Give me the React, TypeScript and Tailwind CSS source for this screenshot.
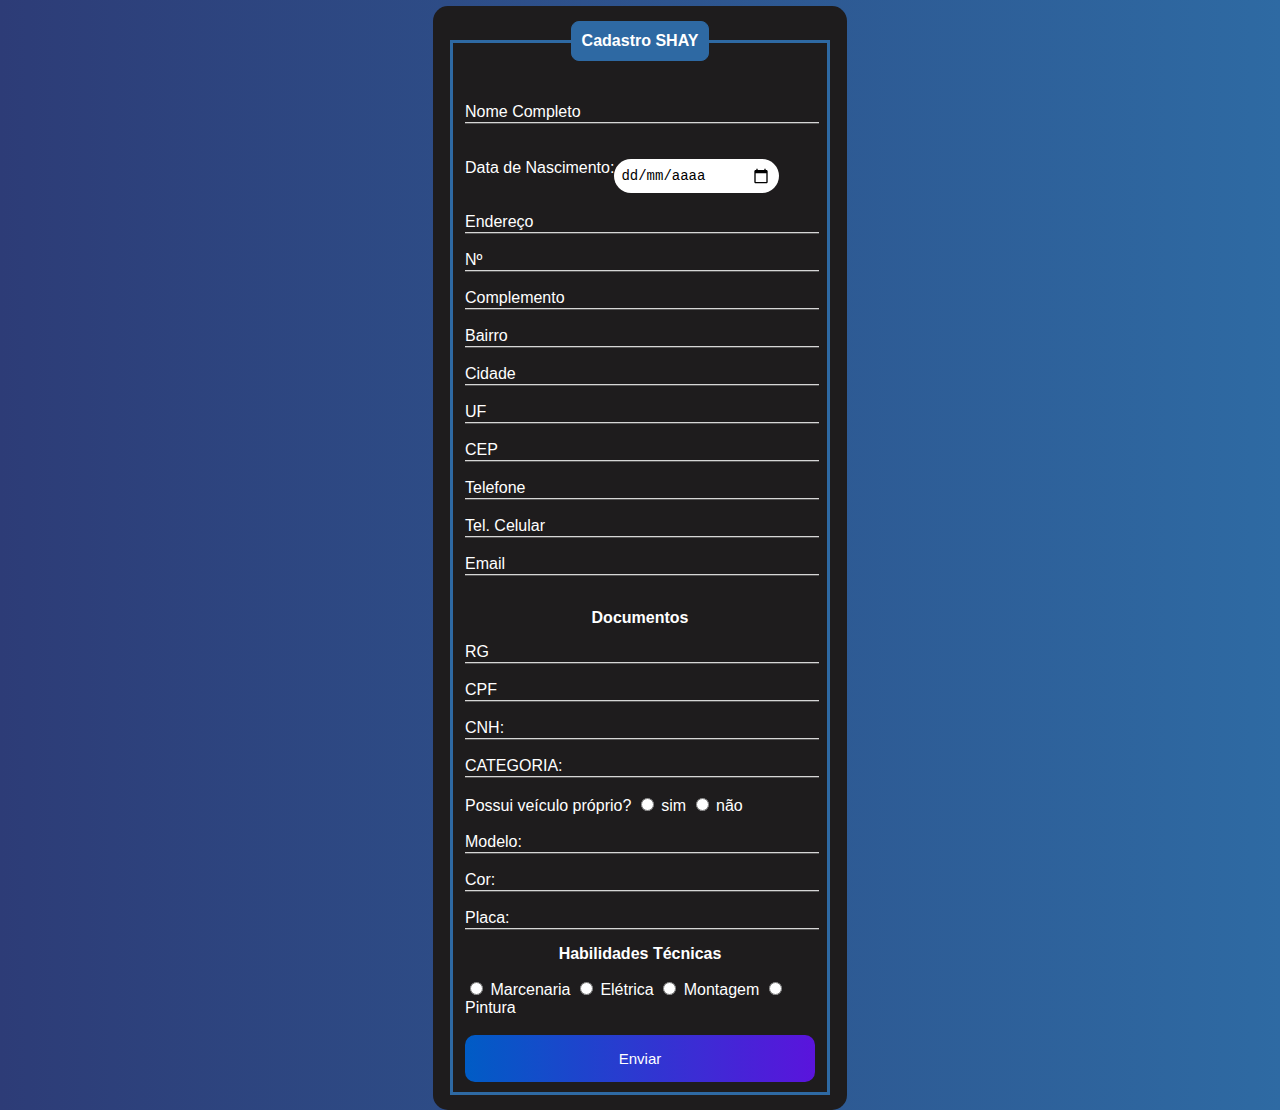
import React from "react";

type FieldProps = { id: string; label: string; type?: string };

function Field({ id, label, type = "text" }: FieldProps) {
  return (
    <div className="relative -mr-1 h-[22px]">
      <input
        id={id}
        name={id}
        type={type}
        className="peer block h-full w-full border-b border-[#d6d6d6] bg-transparent text-base text-white shadow-[0_1px_0_#555454] outline-none"
      />
      <label
        htmlFor={id}
        className="pointer-events-none absolute left-0 top-[2px] peer-focus:-top-4 peer-focus:text-xs"
      >
        {label}
      </label>
    </div>
  );
}

function Radio({ id, name, label }: { id: string; name: string; label: string }) {
  return (
    <>
      <input
        id={id}
        type="radio"
        name={name}
        value={id}
        className="mr-[3px] ml-[5px] h-[13px] w-[13px]"
      />{" "}
      <label htmlFor={id}>{label}</label>{" "}
    </>
  );
}

const address: FieldProps[] = [
  { id: "endereco", label: "Endereço" },
  { id: "numero", label: "Nº" },
  { id: "complemento", label: "Complemento" },
  { id: "bairro", label: "Bairro" },
  { id: "cidade", label: "Cidade" },
  { id: "uf", label: "UF" },
  { id: "cep", label: "CEP" },
  { id: "telefone", label: "Telefone", type: "tel" },
  { id: "celular", label: "Tel. Celular", type: "tel" },
  { id: "email", label: "Email", type: "email" },
];

const documents: FieldProps[] = [
  { id: "rg", label: "RG" },
  { id: "cpf", label: "CPF" },
  { id: "cnh", label: "CNH:" },
  { id: "categoria", label: "CATEGORIA:" },
];

const vehicle: FieldProps[] = [
  { id: "modelo", label: "Modelo:" },
  { id: "cor", label: "Cor:" },
  { id: "placa", label: "Placa:" },
];

function FieldList({ fields }: { fields: FieldProps[] }) {
  return (
    <div className="flex flex-col gap-4">
      {fields.map((field) => (
        <Field key={field.id} {...field} />
      ))}
    </div>
  );
}

export default function App() {
  return (
    <main className="min-h-screen bg-linear-to-r/srgb from-[#2d3c77] to-[#2e6aa3] pt-1.5 font-['Liberation_Sans',Arial,sans-serif] text-base leading-[18px] text-white">
      <form
        className="mx-auto max-w-[414px] rounded-[15px] bg-[#1e1c1d] px-[17px] py-[15px]"
        onSubmit={(event) => event.preventDefault()}
      >
        <fieldset className="min-w-0 border-3 border-[#2e69a3] px-3 pt-10 pb-2.5">
          <legend className="mx-auto rounded-lg border border-[#2e69a3] bg-[#2e69a3] p-2.5 font-bold">
            Cadastro SHAY
          </legend>

          <Field id="nome" label="Nome Completo" />

          <div className="mt-9 mb-[18px] flex items-start">
            <label htmlFor="nascimento">Data de Nascimento:</label>
            <div className="flex h-[34px] w-[165px] items-center rounded-full bg-white pr-2.5 pl-[7px] text-black">
              <input
                id="nascimento"
                name="nascimento"
                type="text"
                placeholder="dd/mm/aaaa"
                className="min-w-0 flex-1 bg-transparent font-['Liberation_Mono',monospace] text-sm outline-none placeholder:text-black"
              />
              <button type="button" aria-label="Abrir calendário">
                <svg viewBox="0 0 24 24" className="block h-4 w-4" fill="currentColor" aria-hidden="true">
                  <path d="M20 3h-1V1h-2v2H7V1H5v2H4c-1.1 0-2 .9-2 2v16c0 1.1.9 2 2 2h16c1.1 0 2-.9 2-2V5c0-1.1-.9-2-2-2zm0 18H4V8h16v13z" />
                </svg>
              </button>
            </div>
          </div>

          <FieldList fields={address} />

          <h2 className="mt-[34px] mb-3.5 text-center font-bold">Documentos</h2>
          <FieldList fields={documents} />

          <div role="radiogroup" aria-labelledby="veiculo" className="mt-5 mb-4">
            <span id="veiculo">Possui veículo próprio?</span>{" "}
            <Radio id="sim" name="veiculo" label="sim" />
            <Radio id="nao" name="veiculo" label="não" />
          </div>

          <FieldList fields={vehicle} />

          <h2 id="habilidades" className="mt-4 mb-[18px] text-center font-bold">
            Habilidades Técnicas
          </h2>
          <div role="radiogroup" aria-labelledby="habilidades">
            <Radio id="marcenaria" name="habilidade" label="Marcenaria" />
            <Radio id="eletrica" name="habilidade" label="Elétrica" />
            <Radio id="montagem" name="habilidade" label="Montagem" />
            <Radio id="pintura" name="habilidade" label="Pintura" />
          </div>

          <button
            type="submit"
            className="mt-[18px] block h-[47px] w-full cursor-pointer rounded-[10px] bg-linear-to-r/srgb from-[#005cc5] to-[#5a14dc] text-[15px] text-white"
          >
            Enviar
          </button>
        </fieldset>
      </form>
    </main>
  );
}
